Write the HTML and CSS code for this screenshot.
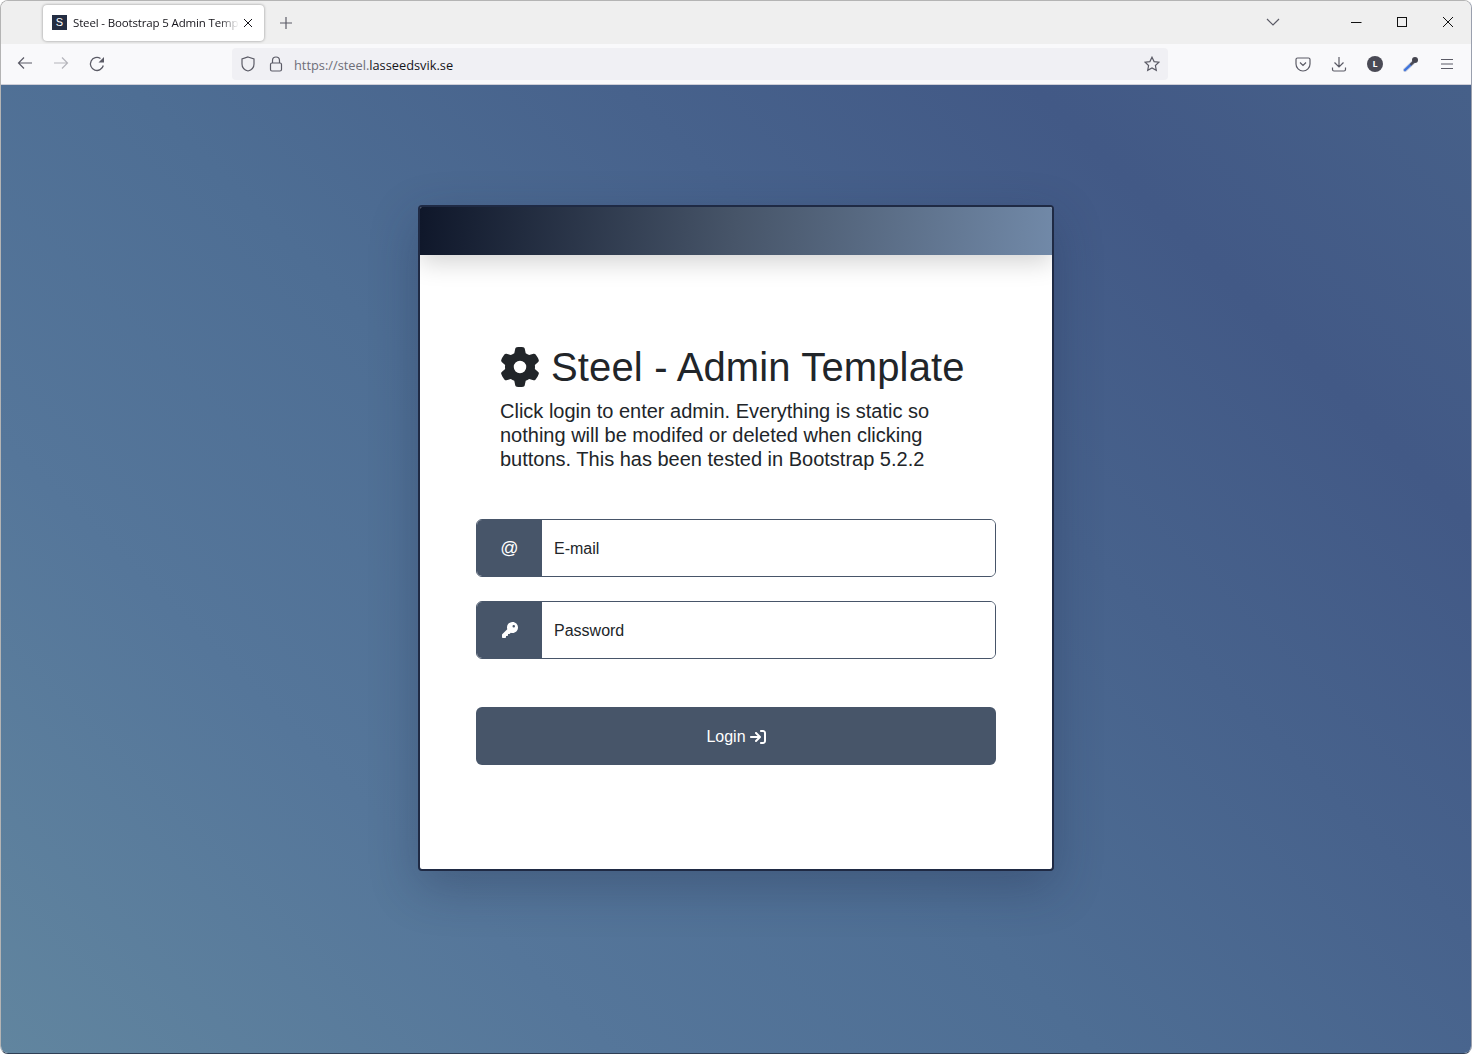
FILE: index.html
```html
<!DOCTYPE html>
<html lang="en">
<head>
<meta charset="utf-8">
<title>Steel - Bootstrap 5 Admin Template</title>
<link rel="stylesheet" href="styles.css">
</head>
<body>
<div class="window">
  <header class="tabbar">
    <div class="tab">
      <span class="favicon">S</span>
      <span class="tab-title">Steel - Bootstrap 5 Admin Template</span>
      <svg class="tab-close" viewBox="0 0 12 12" width="12" height="12"><path d="M2 2l8 8M10 2l-8 8"/></svg>
    </div>
    <svg class="new-tab" viewBox="0 0 12 12" width="12" height="12"><path d="M6 0v12M0 6h12"/></svg>
    <div class="tabbar-right">
      <svg class="tab-list" viewBox="0 0 14 8" width="14" height="8"><path d="M1 1l6 6 6-6"/></svg>
      <div class="win-controls">
        <svg viewBox="0 0 12 12" width="12" height="12"><path d="M1 6.500h10.500"/></svg>
        <svg viewBox="0 0 12 12" width="12" height="12"><rect x="1.500" y="1.500" width="9" height="9"/></svg>
        <svg viewBox="0 0 12 12" width="12" height="12"><path d="M1 1l10 10M11 1L1 11"/></svg>
      </div>
    </div>
  </header>
  <nav class="toolbar">
    <div class="nav-buttons">
      <svg viewBox="0 0 16 16" width="16" height="16"><path d="M15 8H1.500M7 2.500L1.500 8 7 13.500"/></svg>
      <svg class="disabled" viewBox="0 0 16 16" width="16" height="16"><path d="M1 8h13.500M9 2.500L14.500 8 9 13.500"/></svg>
      <svg class="reload" viewBox="0 0 16 18" width="16" height="18"><path d="M14.300 10.500A6.500 6.500 0 1 1 11.500 3.500"/><path class="reload-head" d="M15 2v5.500H9.500z"/></svg>
    </div>
    <div class="urlbar">
      <svg class="url-icon" viewBox="0 0 16 16" width="16" height="16"><path d="M8 1l6 2v5c0 3.500-2.500 6-6 7-3.500-1-6-3.500-6-7V3z"/></svg>
      <svg class="url-icon" viewBox="0 0 16 16" width="16" height="16"><path d="M4.500 7V4.500a3.500 3.500 0 0 1 7 0V7"/><rect x="2.500" y="7" width="11" height="8" rx="1.500"/></svg>
      <span class="url"><span class="url-dim">https://steel.</span>lasseedsvik.se</span>
      <svg class="url-icon url-star" viewBox="0 0 16 16" width="16" height="16"><path d="M8 1.200l2.100 4.400 4.800.6-3.500 3.300.9 4.800L8 12l-4.300 2.300.9-4.800L1.100 6.200l4.800-.6z"/></svg>
    </div>
    <div class="tools">
      <svg viewBox="0 0 16 16" width="16" height="16"><path d="M2.500 2h11A1.500 1.500 0 0 1 15 3.500V8a7 7 0 0 1-14 0V3.500A1.500 1.500 0 0 1 2.500 2zM5 6.500L8 9.500l3-3"/></svg>
      <svg viewBox="0 0 16 16" width="16" height="16"><path d="M8 1v10M3.500 6.500L8 11l4.500-4.500M1.500 11.500v2a1.500 1.500 0 0 0 1.500 1.500h10a1.500 1.500 0 0 0 1.500-1.500v-2"/></svg>
      <span class="profile">L</span>
      <svg class="dropper" viewBox="0 0 16 16" width="16" height="16"><path class="dropper-halo" d="M2 14L10 6.500"/><path class="dropper-glass" d="M2 14L7.500 8.800"/><path class="dropper-neck" d="M7.500 8.800L10.500 6"/><circle class="dropper-head" cx="12" cy="4" r="3"/></svg>
      <svg viewBox="0 0 16 16" width="16" height="16"><path d="M2 3.500h12M2 8h12M2 12.500h12"/></svg>
    </div>
  </nav>
  <main class="page">
    <section class="card">
      <div class="card-strip"></div>
      <div class="card-body">
        <div class="intro">
          <h1 class="title">
            <svg class="gear" viewBox="0 0 512 512"><path d="M495.900 166.600c3.200 8.700 .5 18.400-6.400 24.600l-43.300 39.400c1.100 8.300 1.700 16.800 1.700 25.400s-.6 17.100-1.700 25.400l43.300 39.400c6.900 6.200 9.600 15.900 6.400 24.600c-4.400 11.900-9.700 23.300-15.800 34.300l-4.700 8.100c-6.600 11-14 21.400-22.100 31.200c-5.900 7.200-15.700 9.600-24.500 6.800l-55.700-17.700c-13.400 10.300-28.200 18.900-44 25.400l-12.500 57.100c-2 9.100-9 16.300-18.200 17.800c-13.800 2.300-28 3.500-42.500 3.500s-28.700-1.200-42.500-3.500c-9.200-1.500-16.200-8.700-18.200-17.800l-12.500-57.100c-15.800-6.500-30.600-15.100-44-25.400L83.100 425.900c-8.800 2.800-18.600 .3-24.500-6.800c-8.100-9.800-15.500-20.200-22.100-31.200l-4.700-8.100c-6.100-11-11.400-22.400-15.800-34.300c-3.200-8.700-.5-18.400 6.400-24.600l43.300-39.400C64.600 273.100 64 264.600 64 256s.6-17.100 1.700-25.400L22.400 191.200c-6.900-6.200-9.600-15.900-6.400-24.600c4.400-11.900 9.700-23.300 15.800-34.300l4.700-8.100c6.600-11 14-21.400 22.100-31.200c5.900-7.200 15.700-9.600 24.500-6.800l55.700 17.700c13.400-10.300 28.200-18.900 44-25.400l12.500-57.100c2-9.100 9-16.300 18.200-17.800C227.300 1.200 241.500 0 256 0s28.700 1.200 42.500 3.500c9.200 1.500 16.200 8.700 18.200 17.800l12.500 57.100c15.800 6.500 30.600 15.100 44 25.400l55.700-17.700c8.800-2.800 18.600-.3 24.500 6.800c8.100 9.800 15.500 20.200 22.100 31.200l4.700 8.100c6.100 11 11.400 22.400 15.800 34.300zM256 336a80 80 0 1 0 0-160 80 80 0 1 0 0 160z"/></svg>
            <span>Steel - Admin Template</span>
          </h1>
          <p class="lead">Click login to enter admin. Everything is static so nothing will be modifed or deleted when clicking buttons. This has been tested in Bootstrap 5.2.2</p>
        </div>
        <form class="login">
          <div class="field">
            <span class="addon">@</span>
            <input class="control" type="email" placeholder="E-mail">
          </div>
          <div class="field">
            <span class="addon"><svg class="key" viewBox="0 0 512 512"><path d="M336 352c97.200 0 176-78.800 176-176S433.200 0 336 0S160 78.800 160 176c0 18.700 2.900 36.800 8.300 53.700L7 391c-4.500 4.500-7 10.600-7 17v80c0 13.300 10.700 24 24 24h80c13.300 0 24-10.700 24-24V448h40c13.300 0 24-10.700 24-24V384h40c6.400 0 12.500-2.500 17-7l33.300-33.300c16.900 5.400 35 8.300 53.700 8.300zM376 96a40 40 0 1 1 0 80 40 40 0 1 1 0-80z"/></svg></span>
            <input class="control" type="password" placeholder="Password">
          </div>
          <button class="submit" type="button">Login <svg class="login-icon" viewBox="0 0 512 512"><path d="M352 96l64 0c17.700 0 32 14.300 32 32l0 256c0 17.700-14.300 32-32 32l-64 0c-17.700 0-32 14.300-32 32s14.300 32 32 32l64 0c53 0 96-43 96-96l0-256c0-53-43-96-96-96l-64 0c-17.700 0-32 14.300-32 32s14.300 32 32 32zm-9.400 182.600c12.500-12.500 12.500-32.800 0-45.300l-128-128c-12.500-12.500-32.800-12.500-45.300 0s-12.500 32.800 0 45.300L242.700 224 32 224c-17.700 0-32 14.300-32 32s14.300 32 32 32l210.700 0-73.400 73.400c-12.500 12.500-12.500 32.800 0 45.300s32.800 12.500 45.300 0l128-128z"/></svg></button>
        </form>
      </div>
    </section>
  </main>
</div>
</body>
</html>
```
FILE: styles.css
```css
* { box-sizing: border-box; }
html, body { margin: 0; height: 100%; overflow: hidden; background: #fff; }
body { font-family: "Liberation Sans", Arial, sans-serif; color: #212529; }

.window {
  height: 1054px;
  display: flex;
  flex-direction: column;
  border: 1px solid #b4b4b4;
  border-right-color: #9aa0ae;
  border-bottom-color: #2f3f55;
  border-radius: 8px;
  overflow: hidden;
}

/* Browser chrome */
.tabbar {
  height: 43px;
  flex: none;
  background: #efefef;
  display: flex;
  align-items: center;
  padding-left: 42px;
}
.tab {
  width: 221px;
  height: 36px;
  background: #fff;
  border-radius: 4px;
  box-shadow: 0 0 3px rgba(0, 0, 0, .4);
  display: flex;
  align-items: center;
  padding: 0 10px 0 9px;
  font: 11.500px "Open Sans", sans-serif;
  letter-spacing: -.15px;
  color: #15141a;
}
.favicon {
  width: 15px;
  height: 15px;
  flex: none;
  background: #232d42;
  color: #fff;
  font: 11px/15px "Liberation Sans", sans-serif;
  letter-spacing: 0;
  text-align: center;
  margin-right: 6px;
}
.tab-title {
  flex: 1;
  min-width: 0;
  white-space: nowrap;
  overflow: hidden;
  -webkit-mask-image: linear-gradient(to right, #000 88%, transparent);
  mask-image: linear-gradient(to right, #000 88%, transparent);
}
svg { fill: none; stroke: #5b5b66; stroke-width: 1.2; flex: none; }
.tab-close { flex: none; margin-left: 3px; stroke: #15141a; stroke-width: 1; }
.new-tab { margin-left: 16px; }
.tabbar-right {
  margin-left: auto;
  display: flex;
  align-items: center;
}
.tab-list { margin-right: 70px; margin-top: -2px; }
.win-controls { display: flex; gap: 34px; padding-right: 17px; margin-top: -2px; }
.win-controls svg { stroke: #111; stroke-width: 1; }

.toolbar {
  height: 41px;
  flex: none;
  background: #f9f9fb;
  border-bottom: 1px solid #cfcfd8;
  display: flex;
  align-items: center;
  padding-left: 16px;
}
.nav-buttons { display: flex; align-items: flex-start; gap: 20px; width: 215px; }
.nav-buttons .disabled { stroke: #b5b5bb; }
.reload { stroke-width: 1.300; }
.reload-head { fill: #5b5b66; stroke: none; }
.urlbar {
  width: 936px;
  height: 32px;
  margin-top: -1px;
  background: #f0f0f4;
  border-radius: 4px;
  display: flex;
  align-items: center;
  padding: 0 8px;
  gap: 12px;
  font: 12.800px "Open Sans", sans-serif;
  color: #15141a;
}
.url { flex: 1; margin-left: -2px; padding-top: 3px; }
.url-dim { color: #6e6e78; }
.tools {
  margin-left: 127px;
  display: flex;
  align-items: center;
  gap: 20px;
}
.profile {
  width: 16px;
  height: 16px;
  border-radius: 50%;
  background: #4a4a55;
  color: #fff;
  font: bold 9px/16px "Open Sans", sans-serif;
  text-align: center;
}
.dropper-halo { stroke: #c4cbdc; stroke-width: 4; stroke-linecap: round; }
.dropper-glass { stroke: #3f74dd; stroke-width: 2.400; stroke-linecap: round; }
.dropper-neck { stroke: #4a4a55; stroke-width: 2.400; }
.dropper-head { fill: #45454f; stroke: none; }

/* Page */
.page {
  flex: 1;
  display: flex;
  justify-content: center;
  align-items: flex-start;
  padding-top: 120px;
  background: linear-gradient(45deg, #61859f 0%, #55769a 25%, #4e6e94 45%, #47628c 65%, #425986 82%, #466089 100%);
}
.card {
  width: 636px;
  height: 666px;
  background: #fff;
  border: 2px solid #1f2a44;
  border-radius: 4px;
  box-shadow: 0 16px 48px rgba(30, 40, 70, .3);
  overflow: hidden;
}
.card-strip {
  height: 48px;
  background: linear-gradient(95deg, #0f172a, #475569 50%, #7189a8);
  box-shadow: 0 8px 24px rgba(0, 0, 0, .17);
}
.card-body {
  padding: 88px 56px 0;
}
.intro { padding: 0 24px; }
.title {
  margin: 0;
  display: flex;
  align-items: center;
  gap: 11px;
  font-size: 40px;
  font-weight: 400;
  line-height: 48px;
  letter-spacing: .14px;
  white-space: nowrap;
}
.gear { width: 40px; height: 40px; fill: #212529; stroke: none; }
.lead {
  margin: 8px 0 0;
  font-size: 20px;
  line-height: 24px;
}
.login { margin-top: 48px; display: flex; flex-direction: column; gap: 24px; }
.field {
  height: 58px;
  display: flex;
  border: 1px solid #475569;
  border-radius: 6px;
  overflow: hidden;
}
.addon {
  width: 65px;
  flex: none;
  padding-top: 1px;
  background: #475569;
  color: #fff;
  font-size: 18px;
  display: flex;
  align-items: center;
  justify-content: center;
}
.key { width: 16px; height: 16px; fill: #fff; stroke: none; margin-top: -2px; }
.control {
  flex: 1;
  min-width: 0;
  border: 0;
  outline: 0;
  padding: 2px 12px 0;
  font: 16px "Liberation Sans", Arial, sans-serif;
  color: #212529;
}
.control::placeholder { color: #212529; opacity: 1; }
.submit {
  margin-top: 24px;
  height: 58px;
  border: 0;
  border-radius: 6px;
  padding-top: 2px;
  background: #475569;
  color: #fff;
  font: 16px "Liberation Sans", Arial, sans-serif;
  display: flex;
  align-items: center;
  justify-content: center;
  gap: 4px;
}
.login-icon { width: 16px; height: 16px; fill: #fff; stroke: none; }
```
